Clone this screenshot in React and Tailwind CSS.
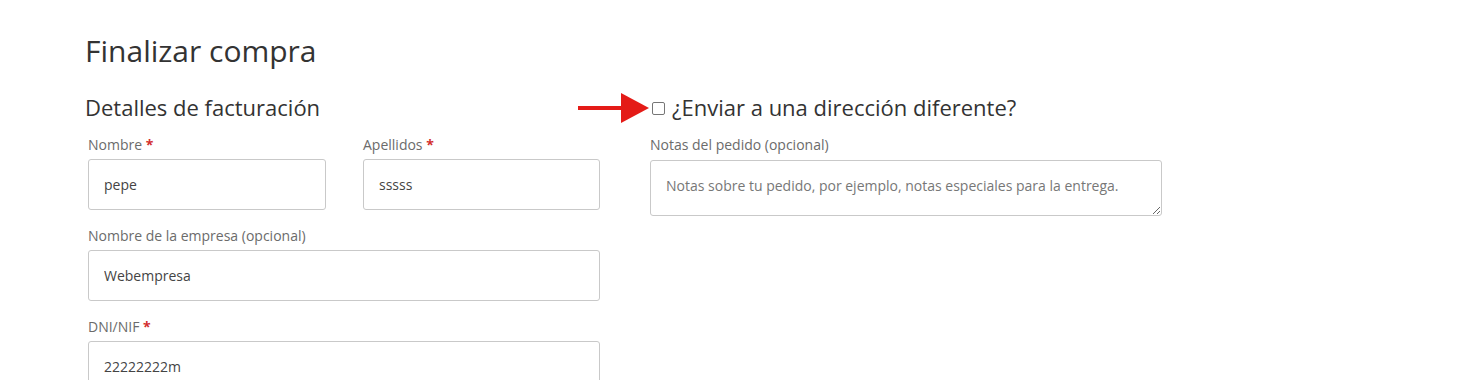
import React from 'react';

function Field({ label, required, value, className = '' }) {
  return (
    <div className={className}>
      <label className="block text-[14px] leading-[20px] text-[#6b6b6b] mb-[4px]">
        {label}
        {required && <span className="text-[#d32f2f] font-bold"> *</span>}
      </label>
      <input
        readOnly
        value={value}
        className="w-full h-[51px] px-[15px] text-[14px] text-[#444] bg-white border border-[#c9c9c9] rounded-[3px] outline-none"
      />
    </div>
  );
}

export default function App() {
  return (
    <div className="w-[1465px] h-[380px] overflow-hidden bg-white font-['Open_Sans',sans-serif] text-[#333]">
      <div className="pl-[86px] pt-[30px]">
        <h1 className="-ml-[1px] text-[30px] leading-[42px] text-[#333]">Finalizar compra</h1>

        <div className="flex gap-[48px] mt-[20px]">
          {/* Billing details */}
          <div className="w-[516px] pl-[2px]">
            <h3 className="-ml-[3px] text-[22px] leading-[30px] text-[#333] mb-[13px]">
              Detalles de facturación
            </h3>
            <div className="flex gap-[37px]">
              <Field className="w-[238px]" label="Nombre" required value="pepe" />
              <Field className="w-[237px]" label="Apellidos" required value="sssss" />
            </div>
            <Field className="mt-[16px] w-[512px]" label="Nombre de la empresa (opcional)" value="Webempresa" />
            <Field className="mt-[16px] w-[512px]" label="DNI/NIF" required value="22222222m" />
          </div>

          {/* Shipping / notes */}
          <div className="w-[512px]">
            <div className="relative flex items-center h-[30px]">
              <div className="absolute left-[-72px] top-[1px] flex items-center">
                <div className="w-[43px] h-[4px] bg-[#e41b17]" />
                <div className="w-0 h-0 border-y-[15px] border-y-transparent border-l-[28px] border-l-[#e41b17]" />
              </div>
              <span className="ml-[2px] mt-[3px] w-[13px] h-[13px] border border-[#767676] rounded-[2px] bg-white" />
              <span className="ml-[7px] text-[22px] leading-[30px] text-[#333]">
                ¿Enviar a una dirección diferente?
              </span>
            </div>
            <label className="block mt-[13px] text-[14px] leading-[20px] text-[#6b6b6b] mb-[5px]">
              Notas del pedido (opcional)
            </label>
            <textarea
              readOnly
              placeholder="Notas sobre tu pedido, por ejemplo, notas especiales para la entrega."
              className="block w-[512px] h-[56px] px-[15px] py-[15px] text-[14px] leading-[20px] text-[#444] placeholder:text-[#777] bg-white border border-[#c9c9c9] rounded-[3px] outline-none"
            />
          </div>
        </div>
      </div>
    </div>
  );
}
